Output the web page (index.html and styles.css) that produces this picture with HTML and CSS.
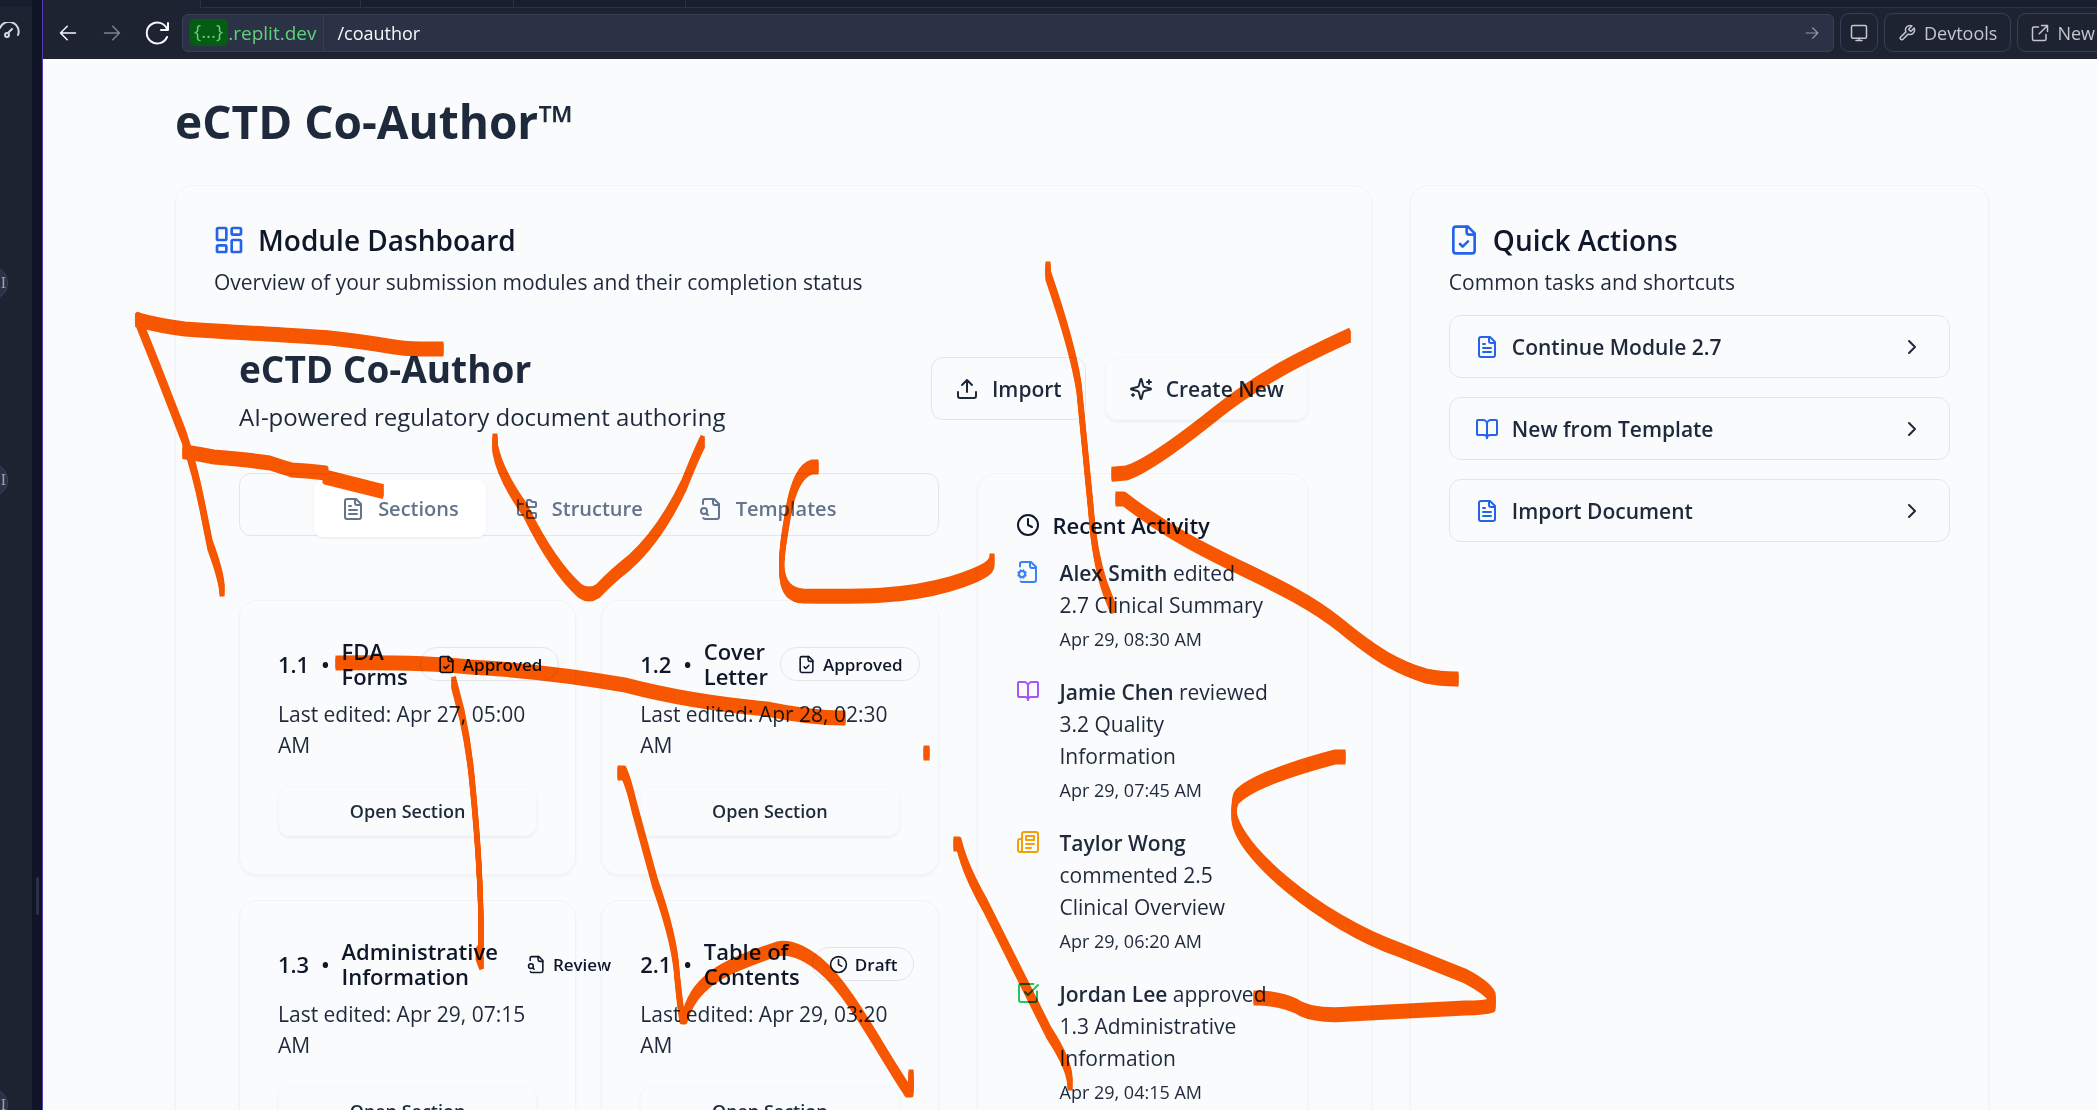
FILE: index.html
```html
<!DOCTYPE html>
<html lang="en">
<head>
<meta charset="utf-8">
<title>eCTD Co-Author</title>
<link rel="stylesheet" href="styles.css">
</head>
<body>
<svg class="defs" aria-hidden="true">
  <symbol id="i-file-text" viewBox="0 0 24 24"><path d="M15 2H6a2 2 0 0 0-2 2v16a2 2 0 0 0 2 2h12a2 2 0 0 0 2-2V7Z"/><path d="M14 2v4a2 2 0 0 0 2 2h4"/><path d="M10 9H8M16 13H8M16 17H8"/></symbol>
  <symbol id="i-file-check" viewBox="0 0 24 24"><path d="M15 2H6a2 2 0 0 0-2 2v16a2 2 0 0 0 2 2h12a2 2 0 0 0 2-2V7Z"/><path d="M14 2v4a2 2 0 0 0 2 2h4"/><path d="m9 15 2 2 4-4"/></symbol>
  <symbol id="i-file-search" viewBox="0 0 24 24"><path d="M14 2v4a2 2 0 0 0 2 2h4"/><path d="M4.268 21a2 2 0 0 0 1.727 1H18a2 2 0 0 0 2-2V7l-5-5H6a2 2 0 0 0-2 2v3"/><path d="m9 18-1.500-1.500"/><circle cx="5" cy="14" r="3"/></symbol>
  <symbol id="i-file-cog" viewBox="0 0 24 24"><path d="M14 2v4a2 2 0 0 0 2 2h4"/><path d="m3.200 12.900-.9-.4M3.200 15.100l-.9.400M4.677 21.500A2 2 0 0 0 6 22h12a2 2 0 0 0 2-2V7l-5-5H6a2 2 0 0 0-2 2v2.500M4.900 11.200l-.4-.9M4.900 16.800l-.4.900M7.500 10.300l-.4.900M7.500 17.700l-.4-.9M9.700 12.500l-.9.400M9.700 15.500l-.9-.4"/><circle cx="6" cy="14" r="3"/></symbol>
  <symbol id="i-book" viewBox="0 0 24 24"><path d="M12 7v14"/><path d="M3 18a1 1 0 0 1-1-1V4a1 1 0 0 1 1-1h5a4 4 0 0 1 4 4 4 4 0 0 1 4-4h5a1 1 0 0 1 1 1v13a1 1 0 0 1-1 1h-6a3 3 0 0 0-3 3 3 3 0 0 0-3-3z"/></symbol>
  <symbol id="i-news" viewBox="0 0 24 24"><path d="M4 22h16a2 2 0 0 0 2-2V4a2 2 0 0 0-2-2H8a2 2 0 0 0-2 2v16a2 2 0 0 1-4 0v-9c0-1.100.9-2 2-2h2"/><path d="M18 14h-8M15 18h-5M10 6h8v4h-8z"/></symbol>
  <symbol id="i-check" viewBox="0 0 24 24"><path d="M21 10.500V19a2 2 0 0 1-2 2H5a2 2 0 0 1-2-2V5a2 2 0 0 1 2-2h12.500"/><path d="m9 11 3 3L22 4"/></symbol>
  <symbol id="i-clock" viewBox="0 0 24 24"><circle cx="12" cy="12" r="10"/><path d="M12 6v6l4 2"/></symbol>
  <symbol id="i-tree" viewBox="0 0 24 24"><path d="M20 10a1 1 0 0 0 1-1V6a1 1 0 0 0-1-1h-2.500a1 1 0 0 1-.8-.4l-.9-1.200A1 1 0 0 0 15 3h-2a1 1 0 0 0-1 1v5a1 1 0 0 0 1 1Z"/><path d="M20 21a1 1 0 0 0 1-1v-3a1 1 0 0 0-1-1h-2.900a1 1 0 0 1-.88-.55l-.42-.85a1 1 0 0 0-.92-.6H13a1 1 0 0 0-1 1v5a1 1 0 0 0 1 1Z"/><path d="M3 5a2 2 0 0 0 2 2h3M3 3v13a2 2 0 0 0 2 2h3"/></symbol>
  <symbol id="i-upload" viewBox="0 0 24 24"><path d="M21 15v4a2 2 0 0 1-2 2H5a2 2 0 0 1-2-2v-4M17 8l-5-5-5 5M12 3v12"/></symbol>
  <symbol id="i-sparkles" viewBox="0 0 24 24"><path d="M9.937 15.500A2 2 0 0 0 8.500 14.063l-6.135-1.582a.5.500 0 0 1 0-.962L8.500 9.936A2 2 0 0 0 9.937 8.500l1.582-6.135a.5.500 0 0 1 .963 0L14.063 8.500A2 2 0 0 0 15.500 9.937l6.135 1.581a.5.500 0 0 1 0 .964L15.500 14.063a2 2 0 0 0-1.437 1.437l-1.582 6.135a.5.500 0 0 1-.963 0z"/><path d="M20 3v4M22 5h-4M4 17v2M5 18H3"/></symbol>
  <symbol id="i-dash" viewBox="0 0 24 24"><rect x="3" y="3" width="7" height="9" rx="1"/><rect x="14" y="3" width="7" height="5" rx="1"/><rect x="14" y="12" width="7" height="9" rx="1"/><rect x="3" y="16" width="7" height="5" rx="1"/></symbol>
  <symbol id="i-chevron" viewBox="0 0 24 24"><path d="m9 18 6-6-6-6"/></symbol>
  <symbol id="i-left" viewBox="0 0 24 24"><path d="M22 12H2M11 3l-9 9 9 9"/></symbol>
  <symbol id="i-right" viewBox="0 0 24 24"><path d="M2 12h20M13 3l9 9-9 9"/></symbol>
  <symbol id="i-reload" viewBox="0 0 24 24"><path d="M23 2v7h-7M22 8A10.500 10.500 0 1 0 22 16"/></symbol>
  <symbol id="i-monitor" viewBox="0 0 24 24"><rect x="2" y="2" width="20" height="17" rx="2"/><path d="M12 19v3M8 22h8"/></symbol>
  <symbol id="i-wrench" viewBox="0 0 24 24"><path d="M14.700 6.300a1 1 0 0 0 0 1.400l1.600 1.600a1 1 0 0 0 1.400 0l3.770-3.770a6 6 0 0 1-7.940 7.940l-6.910 6.910a2.120 2.120 0 0 1-3-3l6.910-6.910a6 6 0 0 1 7.940-7.940l-3.760 3.760z"/></symbol>
  <symbol id="i-external" viewBox="0 0 24 24"><path d="M14 2h8v8M22 2 11 13M10 4H4a2 2 0 0 0-2 2v14a2 2 0 0 0 2 2h14a2 2 0 0 0 2-2v-6"/></symbol>
</svg>

<div class="app">
  <aside class="rail">
    <svg class="gauge" viewBox="0 0 20 20"><path d="M0 6A9 9 0 0 1 18 13M8 11l4-4"/><circle cx="7" cy="13" r="2"/></svg>
    <span class="avatar avatar-a">I</span>
    <span class="avatar avatar-b">I</span>
    <span class="avatar avatar-c">I</span>
  </aside>
  <div class="gutter"><span class="grip"></span></div>

  <div class="browser">
    <div class="tabstrip"><span class="t1"></span><span class="t2"></span><span class="t3"></span><span class="t4"></span><span class="t5"></span></div>
    <header class="toolbar">
      <button class="nav" aria-label="Back"><svg><use href="#i-left"/></svg></button>
      <button class="nav dim" aria-label="Forward"><svg><use href="#i-right"/></svg></button>
      <button class="nav reload" aria-label="Reload"><svg><use href="#i-reload"/></svg></button>
      <div class="url">
        <span class="host"><span class="sub">{...}</span>.replit.dev</span>
        <input class="path" type="text" value="/coauthor" aria-label="Path">
        <svg class="go"><use href="#i-right"/></svg>
      </div>
      <button class="tool" aria-label="Screen size"><svg><use href="#i-monitor"/></svg></button>
      <button class="tool wide"><svg><use href="#i-wrench"/></svg>Devtools</button>
      <button class="tool wide"><svg><use href="#i-external"/></svg>New</button>
    </header>

    <main class="page">
      <h1>eCTD Co-Author™</h1>
      <div class="columns">
        <section class="card">
          <h2 class="card-title"><svg><use href="#i-dash"/></svg>Module Dashboard</h2>
          <p class="card-desc">Overview of your submission modules and their completion status</p>
          <div class="inner">
            <div class="inner-head">
              <div>
                <h3 class="inner-title">eCTD Co-Author</h3>
                <p class="inner-sub">AI-powered regulatory document authoring</p>
              </div>
              <div class="buttons">
                <button class="btn outline"><svg><use href="#i-upload"/></svg>Import</button>
                <button class="btn raised"><svg><use href="#i-sparkles"/></svg>Create New</button>
              </div>
            </div>
            <div class="inner-grid">
              <div>
                <div class="tabs" role="tablist">
                  <button class="tab active" role="tab" aria-selected="true"><svg><use href="#i-file-text"/></svg>Sections</button>
                  <button class="tab" role="tab"><svg><use href="#i-tree"/></svg>Structure</button>
                  <button class="tab" role="tab"><svg><use href="#i-file-search"/></svg>Templates</button>
                </div>
                <div class="sections">
                  <article class="section">
                    <div class="section-head"><span>1.1</span><span>•</span><h4>FDA<br>Forms</h4><span class="badge"><svg><use href="#i-file-check"/></svg>Approved</span></div>
                    <p class="edited">Last edited: Apr 27, 05:00 AM</p>
                    <button class="open">Open Section</button>
                  </article>
                  <article class="section">
                    <div class="section-head"><span>1.2</span><span>•</span><h4>Cover<br>Letter</h4><span class="badge"><svg><use href="#i-file-check"/></svg>Approved</span></div>
                    <p class="edited">Last edited: Apr 28, 02:30 AM</p>
                    <button class="open">Open Section</button>
                  </article>
                  <article class="section">
                    <div class="section-head"><span>1.3</span><span>•</span><h4>Administrative<br>Information</h4><span class="badge plain"><svg><use href="#i-file-search"/></svg>Review</span></div>
                    <p class="edited">Last edited: Apr 29, 07:15 AM</p>
                    <button class="open">Open Section</button>
                  </article>
                  <article class="section">
                    <div class="section-head"><span>2.1</span><span>•</span><h4>Table of<br>Contents</h4><span class="badge"><svg><use href="#i-clock"/></svg>Draft</span></div>
                    <p class="edited">Last edited: Apr 29, 03:20 AM</p>
                    <button class="open">Open Section</button>
                  </article>
                </div>
              </div>
              <section class="activity">
                <h4 class="activity-title"><svg><use href="#i-clock"/></svg>Recent Activity</h4>
                <ul>
                  <li><svg class="blue"><use href="#i-file-cog"/></svg><div><p><b>Alex Smith</b> edited<br>2.7 Clinical Summary</p><time>Apr 29, 08:30 AM</time></div></li>
                  <li><svg class="purple"><use href="#i-book"/></svg><div><p><b>Jamie Chen</b> reviewed 3.2 Quality Information</p><time>Apr 29, 07:45 AM</time></div></li>
                  <li><svg class="amber"><use href="#i-news"/></svg><div><p><b>Taylor Wong</b> commented 2.5 Clinical Overview</p><time>Apr 29, 06:20 AM</time></div></li>
                  <li><svg class="green"><use href="#i-check"/></svg><div><p><b>Jordan Lee</b> approved 1.3 Administrative Information</p><time>Apr 29, 04:15 AM</time></div></li>
                </ul>
              </section>
            </div>
          </div>
        </section>

        <section class="card">
          <h2 class="card-title"><svg class="big"><use href="#i-file-check"/></svg>Quick Actions</h2>
          <p class="card-desc">Common tasks and shortcuts</p>
          <div class="actions">
            <button class="action"><svg><use href="#i-file-text"/></svg><span>Continue Module 2.7</span><svg class="chev"><use href="#i-chevron"/></svg></button>
            <button class="action"><svg><use href="#i-book"/></svg><span>New from Template</span><svg class="chev"><use href="#i-chevron"/></svg></button>
            <button class="action"><svg><use href="#i-file-text"/></svg><span>Import Document</span><svg class="chev"><use href="#i-chevron"/></svg></button>
          </div>
        </section>
      </div>
    </main>
  </div>
</div>

<!-- Marker strokes: one thin line repeated downwards makes a tall, narrow nib -->
<svg class="marker" width="2097" height="1110" aria-hidden="true">
  <defs>
    <g id="ink">
      <path d="M138 320 Q160 326 185 329 C240 333 290 335 330 338 Q365 342 388 346 Q405 349 420 349 H441"/>
      <path d="M138 320 L158 370 L184 437 Q195 470 202 505 L210 545 Q221 575 222 589"/>
      <path d="M185 452 Q198 454 214 457 Q250 460 270 463 Q285 468 292 470 Q310 471 326 473 L325 477 L381 491"/>
      <path d="M495 441 V448 Q500 475 525 510 Q553 567 580 591 Q589 597 598 591 Q610 578 630 562 Q660 535 684 485 Q696 455 702 443"/>
      <path d="M816 467 H812 Q794 472 787 520 Q780 560 782 573 Q784 595 803 596 C860 597 905 597 950 584 Q983 574 990 566 Q992 563 992 561"/>
      <path d="M1048 269 V275 Q1073 348 1079 388 L1091 510 Q1094 555 1105 588 L1112 606"/>
      <path d="M1348 336 C1300 358 1260 378 1215 414 Q1150 466 1126 473 L1114 474"/>
      <path d="M1118 499 H1124 C1205 562 1280 577 1340 625 C1380 658 1400 668 1426 676 Q1440 679 1456 679"/>
      <path d="M338 663 Q420 662 470 667 Q545 671 625 685 Q690 702 767 709 Q810 718 843 718"/>
      <path d="M454 684 Q456 692 462 715 Q469 748 472 780 Q482 880 481 950 L478 954 L481 962"/>
      <path d="M620 773 H624 Q629 784 634 806 L655 883 Q675 940 677 975 Q680 1005 682 1017 H685 C695 978 730 965 777 949 Q795 945 820 965 C850 990 880 1050 907 1090 L911 1090 V1077"/>
      <path d="M926 753 H927"/>
      <path d="M956 844 H959 Q965 870 985 905 L1049 1033 Q1070 1065 1070 1083"/>
      <path d="M1343 757 H1335 C1290 769 1250 783 1237 797 Q1234 800 1234 815 C1236 850 1320 922 1400 950 L1465 976 Q1488 988 1493 998 V1005 Q1485 1008 1465 1008 L1350 1014 Q1312 1017 1296 1006 Q1278 998 1256 998"/>
    </g>
  </defs>
  <use href="#ink" y="-5"/><use href="#ink" y="-3"/><use href="#ink" y="-1"/><use href="#ink" y="1"/><use href="#ink" y="3"/><use href="#ink" y="5"/>
</svg>
</body>
</html>
```
FILE: styles.css
```css
* { box-sizing: border-box; }
body {
  margin: 0;
  height: 100vh;
  overflow: hidden;
  position: relative;
  background: #fafbfd;
  color: #1e293b;
  font-family: "Open Sans", "Noto Sans", sans-serif;
}
h1, h2, h3, h4, p, ul { margin: 0; padding: 0; }
button, input { font: inherit; color: inherit; border: 0; background: none; margin: 0; padding: 0; }
svg { width: 24px; height: 24px; flex: none; fill: none; stroke: currentColor; stroke-width: 2; stroke-linecap: round; stroke-linejoin: round; }
.defs { position: absolute; width: 0; height: 0; }

.app { display: flex; height: 100vh; }
.rail { width: 32px; flex: none; background: #1e2332; border-top: 7px solid #181e2e; position: relative; overflow: hidden; }
.gauge { position: absolute; left: 0; top: 15px; width: 20px; height: 20px; color: #d5d9e0; }
.avatar {
  position: absolute; left: -26px; width: 34px; height: 34px; border-radius: 17px;
  background: #2b3245; border: 1px solid #3c445c; color: #9da2b0;
  font: 16px/32px "Liberation Serif", serif; text-align: right; padding-right: 1px;
}
.avatar-a { top: 259px; }
.avatar-b { top: 456px; }
.avatar-c { top: 1081px; }
.gutter { width: 11px; flex: none; background: #0f1525; border-right: 1px solid #5a3cb4; display: flex; align-items: center; justify-content: center; }
.grip { width: 3px; height: 38px; border-radius: 2px; background: #2b3245; margin-top: 682px; }

.browser { flex: 1; min-width: 0; display: flex; flex-direction: column; overflow: hidden; }
.tabstrip { display: flex; height: 8px; flex: none; background: #1e2332; }
.tabstrip span { background: #181e2e; border-left: 1px solid #2b3245; border-bottom: 1px solid #2b3245; }
.tabstrip .t1 { width: 157px; background: none; border: 0; }
.tabstrip .t2 { width: 160px; }
.tabstrip .t3 { width: 153px; }
.tabstrip .t4 { width: 172px; }
.tabstrip .t5 { flex: 1; }
.toolbar { height: 51px; flex: none; background: #1e2332; display: flex; align-items: center; padding: 0 0 2px 16px; margin-right: -18px; }
.nav { display: flex; width: 18px; margin-right: 26px; color: #f5f7fa; }
.nav svg { width: 18px; height: 18px; }
.nav.dim { color: #7d828c; margin-right: 24px; }
.nav.reload { width: 24px; margin-right: 13px; }
.nav.reload svg { width: 24px; height: 24px; }
.url { flex: 1; height: 38px; display: flex; align-items: center; background: #2b3245; border: 1px solid #363f58; border-radius: 6px; margin-right: 6px; font-size: 19px; }
.host { height: 36px; display: flex; align-items: center; padding: 0 7px 0 6px; border-right: 1px solid #363f58; color: #5fd37b; }
.sub { background: #065c12; border-radius: 5px; height: 27px; line-height: 25px; padding: 0 5px; }
.path { flex: 1; min-width: 0; padding-left: 13px; color: #f5f9fc; font-size: 18px; }
.go { width: 14px; height: 14px; color: #9398a3; margin-right: 14px; }
.tool { height: 39px; flex: none; display: flex; align-items: center; gap: 8px; border: 1px solid #363f58; border-radius: 9px; padding: 0 9px; margin-right: 6px; color: #c3c6cc; font-size: 18px; }
.tool svg { width: 18px; height: 18px; }
.tool.wide { padding: 0 13px; }

.page { padding: 36px 108px 0 132px; }
h1 { font-size: 46px; line-height: 52px; font-weight: 700; margin-bottom: 38px; }
.columns { display: grid; grid-template-columns: minmax(0, 31fr) minmax(0, 15fr); gap: 38px; height: 1400px; }
.card, .section, .activity { border: 1px solid #f1f3f6; border-radius: 18px; box-shadow: 0 2px 3px rgba(15, 23, 42, .04); }
.card { padding: 36px 38px; }
.card-title { display: flex; align-items: center; gap: 12px; height: 36px; font-size: 28px; font-weight: 600; color: #0f172a; }
.card-title svg { width: 34px; height: 34px; padding: 1px; color: #2563eb; margin-left: -2px; }
.card-desc { margin: 8px 0 17px; font-size: 21px; line-height: 32px; }

.inner { padding: 27px 25px 0; }
.inner-head { display: flex; justify-content: space-between; align-items: center; margin-bottom: 38px; }
.inner-title { font-size: 37px; line-height: 54px; font-weight: 700; }
.inner-sub { margin-top: 3px; font-size: 24px; line-height: 36px; }
.buttons { display: flex; gap: 19px; }
.btn { height: 63px; display: flex; align-items: center; gap: 13px; padding: 0 23px; border-radius: 12px; font-size: 21px; font-weight: 600; }
.btn.outline { border: 1px solid #e3e6eb; }
.btn.raised, .open { border: 1px solid #f5f7fa; box-shadow: 0 2px 3px rgba(15, 23, 42, .06); }
.inner-grid { display: grid; grid-template-columns: minmax(0, 19fr) minmax(0, 9fr); gap: 38px; align-items: stretch; }
.tabs { height: 63px; display: flex; justify-content: center; align-items: flex-start; gap: 2px; padding-top: 6px; border: 1px solid #e3e6ec; border-radius: 12px; }
.tab { height: 57px; display: flex; align-items: center; gap: 13px; padding: 0 27px; border-radius: 8px; font-size: 20px; font-weight: 600; color: #64748b; }
.tab.active { background: #fff; box-shadow: 0 1px 3px rgba(15, 23, 42, .08); }
.sections { margin-top: 64px; display: grid; grid-template-columns: repeat(2, minmax(0, 1fr)); gap: 25px; }
.section { padding: 38px; }
.section-head { display: flex; align-items: center; gap: 12px; height: 50px; font-size: 22px; line-height: 25px; font-weight: 600; color: #0f172a; white-space: nowrap; }
.section-head h4 { font: inherit; }
.section-head > span { flex: none; }
.badge { display: flex; align-items: center; gap: 7px; height: 34px; padding: 0 16px; border: 1px solid #e3e6eb; border-radius: 17px; font-size: 17px; }
.badge svg { width: 19px; height: 19px; }
.badge.plain { border-color: transparent; }
.edited { margin: 10px 0 25px; font-size: 21px; line-height: 31px; }
.open { width: 100%; height: 50px; border-radius: 12px; font-size: 18px; font-weight: 600; }

.activity { padding: 35px 32px 36px 38px; }
.activity-title { display: flex; align-items: center; gap: 13px; height: 31px; margin-bottom: 17px; font-size: 22px; font-weight: 600; color: #0f172a; }
.activity ul { list-style: none; }
.activity li { display: flex; gap: 20px; margin-bottom: 23px; }
.activity li > svg { margin-top: 3px; }
.activity p { font-size: 21px; line-height: 32px; }
.activity b { font-weight: 600; }
.activity time { display: block; margin-top: 4px; font-size: 18px; line-height: 28px; }
.blue { color: #3b82f6; }
.purple { color: #a855f7; }
.amber { color: #f59e0b; }
.green { color: #22c55e; }

.actions { display: grid; gap: 19px; }
.action { height: 63px; display: flex; align-items: center; gap: 13px; padding: 0 25px; border: 1px solid #e3e6eb; border-radius: 12px; font-size: 21px; font-weight: 600; text-align: left; }
.action svg { color: #2563eb; }
.action span { flex: 1; }
.action .chev { color: #1e293b; }

.marker { position: absolute; left: 0; top: 0; width: 2097px; height: 1110px; color: #fb5800; stroke-width: 5; stroke-linecap: square; stroke-linejoin: round; mix-blend-mode: multiply; pointer-events: none; }
```
